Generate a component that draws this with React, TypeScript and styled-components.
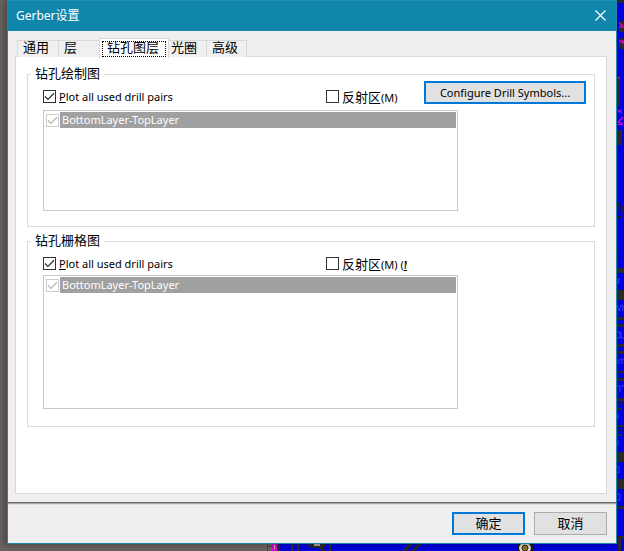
import React, { useState } from "react";
import styled, { createGlobalStyle } from "styled-components";

const latin = `"Noto Sans", "Noto Sans CJK SC", sans-serif`;
const cjk = `"Noto Sans CJK SC", "Noto Sans", sans-serif`;

const GlobalStyle = createGlobalStyle`
  * { box-sizing: border-box; }
  body { margin: 0; background: #686361; color: #000; font-family: ${latin}; font-size: 11px; }
  button, input { font: inherit; color: inherit; margin: 0; }
`;

const Desktop = styled.div`
  position: relative;
  display: flex;
  min-height: 100vh;
  padding: 0 7px 7px;
  overflow: hidden;
`;

const SideBoard = styled.svg`
  position: absolute;
  top: 0;
  right: 0;
`;

const BottomBoard = styled.svg`
  position: absolute;
  bottom: 0;
  right: 0;
`;

const Dialog = styled.section`
  position: relative;
  flex: 1;
  display: flex;
  flex-direction: column;
  background: #efefef;
  border: 1px solid #1e87a6;
  border-top: 0;
  box-shadow: -3px 1px 6px rgba(0, 0, 0, 0.3);
`;

const TitleBar = styled.header`
  display: flex;
  align-items: center;
  justify-content: space-between;
  height: 31px;
  padding: 0 9px 1px 8px;
  background: #0f86aa;
  border-top: 1px solid #2090b1;
  color: #fff;
`;

const Title = styled.h1`
  margin: 0;
  font-size: 12px;
  font-weight: 400;
  line-height: 16px;
`;

const CloseButton = styled.button`
  display: flex;
  padding: 1px;
  border: 0;
  background: none;
`;

const Body = styled.div`
  flex: 1;
  display: flex;
  flex-direction: column;
  padding: 7px 9px 8px 7px;
`;

const TabList = styled.div`
  position: relative;
  display: flex;
  align-items: flex-end;
  height: 19px;
  padding-left: 2px;
  margin-bottom: -1px;
`;

const Tab = styled.button<{ $width: number }>`
  width: ${(p) => p.$width}px;
  height: 17px;
  padding: 0 0 4px 5px;
  border: 1px solid #d9d9d9;
  border-right-width: 0;
  border-bottom-width: 0;
  background: #f0f0f0;
  font-family: ${cjk};
  font-size: 13px;
  line-height: 12px;
  text-align: left;
  white-space: nowrap;
  &:last-child { border-right-width: 1px; }
  &[aria-selected="true"] {
    height: 20px;
    margin-bottom: -1px;
    padding: 2px;
    border-right-width: 1px;
    background: #fff;
  }
  &[aria-selected="true"] + & { border-left-width: 0; padding-left: 2px; }
`;

const FocusBox = styled.span`
  display: block;
  height: 16px;
  padding-left: 4px;
  border: 1px dotted #000;
  line-height: 10px;
`;

const Panel = styled.div`
  flex: 1;
  padding: 10px 11px;
  border: 1px solid #d9d9d9;
  background: #fff;
`;

const Group = styled.fieldset`
  min-width: 0;
  margin: 0 0 7px;
  padding: 0;
  border: 1px solid #dcdcdc;
`;

const Legend = styled.legend`
  margin-left: 3px;
  padding: 0 4px 2px;
  font-family: ${cjk};
  font-size: 13px;
  line-height: 12px;
`;

const GroupBody = styled.div<{ $compact?: boolean }>`
  display: flex;
  flex-direction: column;
  gap: ${(p) => (p.$compact ? 4 : 6)}px;
  padding: ${(p) => (p.$compact ? "7px 8px 17px 15px" : "0 8px 15px 15px")};
`;

const OptionRow = styled.div`
  display: grid;
  grid-template-columns: 283px 81px 1fr;
  align-items: end;
`;

const CheckLabel = styled.label`
  display: flex;
  align-items: center;
  gap: 3px;
  height: 13px;
  margin-bottom: 1px;
  line-height: 15px;
  white-space: nowrap;
`;

const ClipLabel = styled(CheckLabel)`
  height: 17px;
  margin-bottom: -1px;
  overflow: hidden;
`;

const Chinese = styled.span`
  font-family: ${cjk};
  font-size: 13px;
`;

const CheckMark = styled.span`
  position: relative;
  flex: none;
  width: 13px;
  height: 13px;
  svg { position: absolute; inset: 0; visibility: hidden; pointer-events: none; }
  input:checked + svg { visibility: visible; }
`;

const CheckInput = styled.input`
  appearance: none;
  display: block;
  width: 13px;
  height: 13px;
  border: 1px solid #333;
  background: #fff;
  &:disabled { border-color: #ccc; }
  & + svg { color: #333; }
  &:disabled + svg { color: #b8b8b8; }
`;

const LayerList = styled.ul<{ $height: number }>`
  width: 100%;
  max-width: 415px;
  height: ${(p) => p.$height}px;
  margin: 0;
  padding: 1px;
  border: 1px solid #c8c8c8;
  list-style: none;
`;

const LayerItem = styled.label`
  display: flex;
  align-items: center;
  gap: 1px;
  height: 16px;
  padding-left: 1px;
`;

const LayerName = styled.span`
  flex: 1;
  height: 16px;
  padding-left: 2px;
  background: #a0a0a0;
  color: #fff;
  line-height: 16px;
`;

const PushButton = styled.button<{ $primary?: boolean }>`
  width: 73px;
  height: 23px;
  padding: 0 0 2px;
  border: ${(p) => (p.$primary ? "2px solid #0078d7" : "1px solid #adadad")};
  background: #e1e1e1;
  font-family: ${cjk};
  font-size: 13px;
  line-height: 16px;
`;

const SymbolsButton = styled(PushButton)`
  justify-self: end;
  width: 162px;
  padding: 0;
  font-family: ${latin};
  font-size: 11px;
`;

const Footer = styled.footer`
  display: flex;
  justify-content: flex-end;
  gap: 9px;
  padding: 9px 9px 8px;
  border-top: 1px solid #696969;
  box-shadow: inset 0 1px #a8a8a8, inset 0 2px #dedede;
`;

function Check(props: React.InputHTMLAttributes<HTMLInputElement>) {
  return (
    <CheckMark>
      <CheckInput type="checkbox" {...props} />
      <svg width="13" height="13" viewBox="0 0 13 13" aria-hidden="true">
        <path d="M2 6.500 4.900 9.400 11 3.300" fill="none" stroke="currentColor" strokeWidth="1.300" />
      </svg>
    </CheckMark>
  );
}

function Layers({ height }: { height: number }) {
  return (
    <LayerList $height={height}>
      <li>
        <LayerItem>
          <Check defaultChecked disabled />
          <LayerName>BottomLayer-TopLayer</LayerName>
        </LayerItem>
      </li>
    </LayerList>
  );
}

function PlotAll() {
  return (
    <CheckLabel>
      <Check defaultChecked />
      <span><u>P</u>lot all used drill pairs</span>
    </CheckLabel>
  );
}

const tabs = [
  { name: "通用", width: 41 },
  { name: "层", width: 41 },
  { name: "钻孔图层", width: 70 },
  { name: "光圈", width: 37 },
  { name: "高级", width: 41 },
];

const sideBars = [
  [0, 0, 8, 3], [3, 21, 5, 11], [3, 38, 5, 11], [1, 76, 3, 30], [1, 130, 5, 15],
  [1, 268, 7, 5], [1, 290, 7, 10], [1, 317, 7, 3], [1, 324, 7, 3], [1, 344, 7, 3],
  [1, 351, 7, 3], [1, 371, 7, 2], [1, 378, 7, 3], [1, 398, 7, 3], [1, 408, 5, 2],
  [1, 425, 7, 2], [1, 434, 5, 2], [1, 452, 7, 10], [1, 479, 7, 10], [1, 506, 7, 3],
  [2, 536, 6, 3], [2, 536, 3, 15],
];

function Boards() {
  return (
    <>
      <BottomBoard width="357" height="8" viewBox="0 0 357 8" aria-hidden="true">
        <path fill="#0000dc" d="M13 0H357V8H13Z" />
        <path fill="#444" d="M0 0h1v8h-1zM1 3h5v1h-5z" />
        <path fill="#e000d8" d="M5 0h5v8h-5z" />
        <path fill="#bbb" d="M7 2h1v4h-1z" />
        <path fill="#292929" d="M10 0h3v8h-3zM24 0h3v8h-3zM30 0h3v8h-3zM62 0h3v8h-3zM40 0h19v3l-3 2 3 3h-4l-3-3h-7l-5-3z" />
        <path fill="#aaa" d="M47 0h6v3h-6z" />
        <path stroke="#292929" strokeWidth="3" d="m136 9 9-9m0 9 9-9" />
        <path fill="#191919" d="M250 1h16v7h-16z" />
        <ellipse cx="258" cy="5" rx="6" ry="5" fill="#ddd" />
        <circle cx="258" cy="5" r="3" fill="#927321" stroke="#382d17" />
      </BottomBoard>
      <SideBoard width="8" height="551" viewBox="0 0 8 551" aria-hidden="true">
        <path fill="#0000e0" d="M0 0h8v551h-8z" />
        {sideBars.map(([x, y, w, h]) => (
          <rect key={`${x}-${y}-${w}`} x={x} y={y} width={w} height={h} fill="#292929" />
        ))}
        <path stroke="#f000e0" strokeWidth="1.200" fill="none" d="m3 23 4 3m-4 1h5m-5 13 4 3v-3M1 78h3M1 109l2 3 2-2m2 7-5 5 5 2M1 124.500h5" />
        <path stroke="#222" strokeWidth="2" strokeDasharray="2 1" fill="none" d="m1 205 7 9m-6-11 6 7M1 217h5M1 249l2 3M1 258l2-2M1 405l6-3M1 431l6-2" />
        <path stroke="#3c3ce8" fill="none" d="M1 278v5h2v-5M1 305l2 6 2-6h2v6M1 332h3v6H1m4-6v6h3M1 359v5m2-5v5m1-5h4m-2 0v5M1 386h3v6m1-6h3M2 414v5M2 440v6M1 467h2v6H1M1 494h3v6H1M5 109v5" />
      </SideBoard>
    </>
  );
}

export default function App() {
  const [active, setActive] = useState("钻孔图层");
  return (
    <>
      <GlobalStyle />
      <Desktop>
        <Boards />
        <Dialog role="dialog" aria-labelledby="dialog-title">
          <TitleBar>
            <Title id="dialog-title">Gerber设置</Title>
            <CloseButton aria-label="关闭">
              <svg width="11" height="11" viewBox="0 0 11 11" aria-hidden="true">
                <path d="m.5.5 10 10m0-10-10 10" stroke="#fff" strokeWidth="1.200" />
              </svg>
            </CloseButton>
          </TitleBar>
          <Body>
            <TabList role="tablist">
              {tabs.map(({ name, width }) => (
                <Tab key={name} role="tab" $width={width} aria-selected={name === active} onClick={() => setActive(name)}>
                  {name === active ? <FocusBox>{name}</FocusBox> : name}
                </Tab>
              ))}
            </TabList>
            <Panel role="tabpanel">
              <Group>
                <Legend>钻孔绘制图</Legend>
                <GroupBody>
                  <OptionRow>
                    <PlotAll />
                    <ClipLabel>
                      <Check />
                      <span><Chinese>反射区</Chinese>(M)</span>
                    </ClipLabel>
                    <SymbolsButton $primary>Configure Drill Symbols...</SymbolsButton>
                  </OptionRow>
                  <Layers height={101} />
                </GroupBody>
              </Group>
              <Group>
                <Legend>钻孔栅格图</Legend>
                <GroupBody $compact>
                  <OptionRow>
                    <PlotAll />
                    <ClipLabel>
                      <Check />
                      <span><Chinese>反射区</Chinese>(M) (<u>M</u>)</span>
                    </ClipLabel>
                  </OptionRow>
                  <Layers height={134} />
                </GroupBody>
              </Group>
            </Panel>
          </Body>
          <Footer>
            <PushButton $primary>确定</PushButton>
            <PushButton>取消</PushButton>
          </Footer>
        </Dialog>
      </Desktop>
    </>
  );
}
